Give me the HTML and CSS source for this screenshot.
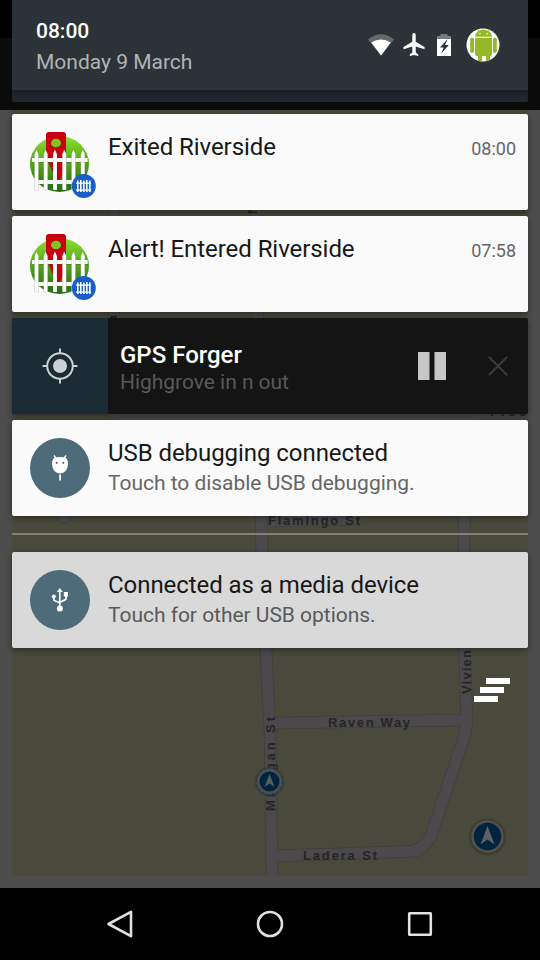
FILE: index.html
```html
<!DOCTYPE html>
<html lang="en">
<head>
<meta charset="utf-8">
<title>Notifications</title>
<link rel="stylesheet" href="styles.css">
</head>
<body>
<svg width="0" height="0" class="defs" aria-hidden="true">
  <defs>
    <linearGradient id="grass" x1="0" y1="0" x2="0" y2="1"><stop offset="0" stop-color="#8ee02c"/><stop offset=".45" stop-color="#58a81c"/><stop offset="1" stop-color="#246b10"/></linearGradient>
    <symbol id="fence" viewBox="0 0 96 96">
      <ellipse cx="47.500" cy="50" rx="29.500" ry="28" fill="url(#grass)"/>
      <path fill="#c8000f" d="M34 21q0-3 3-3h14q3 0 3 3v20q-1 15-7 27q-8-10-13-27z"/>
      <ellipse cx="44" cy="29" rx="5" ry="4.300" fill="#79c820"/>
      <g fill="#2f6518" opacity=".5">
        <path d="M22 44h54v4.800H22zM22 66h32v4.500H22z"/>
      </g>
      <g fill="#fff">
        <path d="M20 44h55.700v4H20zM20 66h52v4H20z"/>
        <path id="picket" d="M22.500 76V40l1.900-4.500 2.100 4.500v36z" stroke="#444" stroke-opacity=".3" stroke-width=".5"/>
        <use href="#picket" x="9.200"/><use href="#picket" x="18.500"/><use href="#picket" x="27.800"/><use href="#picket" x="37"/><use href="#picket" x="46.300"/>
      </g>
      <circle cx="71.800" cy="72" r="12" fill="#185fca"/>
      <g fill="#fff">
        <path d="M64 68.500h15v1.200H64zM64 75.500h15v1.200H64zM65 66.500h1.600V78H65zM68 66h1.600v12H68zM71 66.500h1.600V78H71zM74 66h1.600v12H74zM77 66.500h1.600V78H77z"/>
      </g>
    </symbol>
  </defs>
</svg>
<div class="screen">
  <svg class="backdrop" viewBox="0 0 540 888" width="540" height="888" aria-hidden="true">
    <rect width="540" height="888" fill="#4c4c4c"/>
    <rect width="540" height="110" fill="#0b0b0b"/>
    <rect width="540" height="38" fill="#000"/>
    <rect x="12" y="110" width="516" height="766" fill="#49493c"/>
    <g fill="none" stroke-linejoin="round">
      <g stroke="#3f3f38" stroke-width="12.500">
        <path d="M254 110L262 560L266 650L270 730L272 876M466 418L463 600L467 722M272 723L467 720M275 856L420 851M467 720C467 730 464 738 461 746L431 836Q424 849 412 851M114 204V418"/>
        <path d="M114 417L528 414M270 521L360 519"/>
      </g>
      <g stroke="#4b494b" stroke-width="11">
        <path d="M254 110L262 560L266 650L270 730L272 876M466 418L463 600L467 722M272 723L467 720M275 856L420 851M467 720C467 730 464 738 461 746L431 836Q424 849 412 851M114 204V418"/>
        <path d="M114 417L528 414M270 521L360 519"/>
      </g>
    </g>
    <circle cx="64" cy="517" r="6" fill="#4b494b" stroke="#3e3e38"/>
    <g class="street">
      <text x="268" y="525" textLength="92">Flamingo St</text>
      <text x="490" y="416" textLength="36">Floc</text>
      <text x="328" y="727" textLength="82">Raven Way</text>
      <text x="303" y="860" textLength="74">Ladera St</text>
      <text transform="translate(275 811) rotate(-90)" textLength="94">Milligan St</text>
      <text transform="translate(471 694) rotate(-90)" textLength="44">Vivien</text>
      <text transform="translate(257 214) rotate(-90)">N</text>
      <text transform="translate(117 323) rotate(-90)">n</text>
    </g>
    <circle cx="269.500" cy="781.500" r="15" fill="#333832" opacity=".5"/>
    <circle cx="269.500" cy="781.500" r="13" fill="#4e4e4d" stroke="#123a58" stroke-dasharray="3 2"/>
    <circle cx="269.500" cy="781.500" r="10" fill="#00243e"/>
    <path d="M269.500 774l-5 13 5-3.500 5 3.500z" fill="#5b5b5b"/>
    <circle cx="487.500" cy="837" r="18.500" fill="#34342c" opacity=".6"/>
    <circle cx="487.500" cy="836.500" r="15" fill="#00243e" stroke="#505052" stroke-width="2.600"/>
    <path d="M487.500 826l-7 18.500 7-5 7 5z" fill="#606062"/>
  </svg>

  <header class="header">
    <div class="header-main">
      <div class="clock">
        <div class="clock-time">08:00</div>
        <div class="clock-date">Monday 9 March</div>
      </div>
      <div class="status">
        <svg class="wifi" width="26" height="22" viewBox="0 0 26 22"><path fill="#65696c" d="M0 5.500Q13-5 26 5.500L13 21.500z"/><path fill="#fff" d="M3.300 8.500Q13 2.500 22.700 8.500L13 21.500z"/></svg>
        <svg class="plane" width="22" height="24" viewBox="0 0 22 24"><path fill="#fff" d="M11 0q1.700 0 1.700 2v6.800L21.500 14v2.200l-8.800-2.600v6l2.500 1.900V23L11 22l-4.200 1v-1.500l2.500-1.900v-6L.5 16.200V14l8.800-5.200V2Q9.300 0 11 0z"/></svg>
        <svg class="battery" width="14" height="22" viewBox="0 0 14 22"><path fill="#777c7f" d="M3.500 0h7v2H14v3H0V2h3.500z"/><path fill="#fff" d="M0 5h14v17H0z"/><path fill="#2b3338" d="M10.500 5L3 13.500h3.700L4 20 11.800 11H8z"/></svg>
        <svg class="avatar" width="34" height="34" viewBox="0 0 34 34"><defs><clipPath id="disc"><circle cx="17" cy="17" r="16.500"/></clipPath></defs><circle cx="17" cy="17" r="16.500" fill="#fff"/><g fill="#93b927" clip-path="url(#disc)"><path d="M9 8.800Q9.500 2.500 17.500 1.500Q25.500 2.500 26 8.800zM9 10h17v16q0 2-2 2H11q-2 0-2-2z"/><rect x="4.200" y="9.500" width="3.800" height="15.500" rx="1.900"/><rect x="27" y="9.500" width="3.800" height="15.500" rx="1.900"/><path d="M12 27h4v7h-4zM20 27h4v7h-4z"/></g><path d="M11.500 1.500l2 2.500M23.500 1.500l-2 2.500" stroke="#93b927"/><circle cx="14" cy="5.800" r=".8" fill="#fff"/><circle cx="21" cy="5.800" r=".8" fill="#fff"/></svg>
      </div>
    </div>
  </header>

  <main class="list">
    <article class="card">
      <svg class="icon" width="96" height="96"><use href="#fence"/></svg>
      <div class="body"><div class="title">Exited Riverside</div></div>
      <time class="when">08:00</time>
    </article>
    <article class="card">
      <svg class="icon" width="96" height="96"><use href="#fence"/></svg>
      <div class="body"><div class="title">Alert! Entered Riverside</div></div>
      <time class="when">07:58</time>
    </article>
    <article class="card media">
      <div class="media-art"><svg width="36" height="36" viewBox="0 0 36 36"><circle cx="18" cy="18" r="7" fill="#cbd1d3"/><path d="M18 .5v5M18 30.500v5M.5 18h5M30.500 18h5" stroke="#cbd1d3" stroke-width="2"/><circle cx="18" cy="18" r="12.800" fill="none" stroke="#cbd1d3" stroke-width="2"/></svg></div>
      <div class="body"><div class="title">GPS Forger</div><div class="text">Highgrove in n out</div></div>
      <svg class="pause" width="28" height="28" viewBox="0 0 28 28"><path fill="#c6c6c6" d="M0 0h11.500v28H0zM16.500 0H28v28H16.500z"/></svg>
      <svg class="close" width="20" height="20" viewBox="0 0 20 20"><path d="M.7.700l18.600 18.600M19.300.7L.7 19.300" stroke="#3b3b3b" stroke-width="2"/></svg>
    </article>
    <article class="card">
      <div class="icon"><div class="disc"><svg width="20" height="26" viewBox="0 0 20 26"><path d="M4 .5l3 4M16 .5l-3 4" stroke="#fff" stroke-width="1.300"/><path fill="#fff" d="M3.800 3Q10 1 16.200 3Q18 5 18 9.500Q17.200 18 10 18.500Q2.800 18 2 9.500Q2 5 3.800 3zM9.200 19.500h1.800V25.500H9.200z"/><circle cx="6.700" cy="7.800" r="1.100" fill="#4e6b79"/><circle cx="13.300" cy="7.800" r="1.100" fill="#4e6b79"/></svg></div></div>
      <div class="body"><div class="title">USB debugging connected</div><div class="text">Touch to disable USB debugging.</div></div>
    </article>
    <hr class="divider">
    <article class="card dim">
      <div class="icon"><div class="disc"><svg width="18" height="24" viewBox="0 0 18 24"><g fill="none" stroke="#fff" stroke-width="1.700"><path d="M8.800 2v19M2.800 8v3.500q0 1 1 1.300l5 2M15 6v4.500q0 1-1 1.400l-5.200 2.300"/></g><path fill="#fff" d="M8.800 0l3 4h-6zM12.800 4h4.200v4.500h-4.200z"/><circle cx="2.800" cy="8.500" r="2" fill="#fff"/><circle cx="8.800" cy="20.500" r="3" fill="#fff"/></svg></div></div>
      <div class="body"><div class="title">Connected as a media device</div><div class="text">Touch for other USB options.</div></div>
    </article>
    <svg class="clear-all" width="36" height="24" viewBox="0 0 36 24"><path fill="#fff" d="M12 0h24v6H12zM6 9h24v6H6zM0 18h24v6H0z"/></svg>
  </main>

  <nav class="navbar">
    <svg width="30" height="30" viewBox="0 0 30 30"><path d="M3.500 15L26 2.800v24.400z"/></svg>
    <svg width="30" height="30" viewBox="0 0 30 30"><circle cx="15" cy="15" r="12"/></svg>
    <svg width="30" height="30" viewBox="0 0 30 30"><rect x="4.200" y="4.200" width="21.600" height="21.600" rx=".5"/></svg>
  </nav>
</div>
</body>
</html>
```
FILE: styles.css
```css
* { box-sizing: border-box; }
body { margin: 0; background: #000; font-family: Roboto, "Liberation Sans", sans-serif; }
svg { display: block; flex: none; }
.defs { position: absolute; }
.screen { position: relative; width: 540px; height: 960px; display: flex; flex-direction: column; overflow: hidden; }
.backdrop { position: absolute; top: 0; left: 0; }
.street { font: bold 13px "Liberation Sans", sans-serif; fill: #252525; }

.header { position: relative; height: 102px; margin: 0 12px; background: linear-gradient(#182023 90px, #1d272c 97px); border-radius: 0 0 2px 2px; }
.header-main { height: 90px; background: #2b3338; display: flex; justify-content: space-between; padding: 18px 28px 0 24px; }
.clock { font-size: 21px; line-height: 25px; padding-top: 1px; }
.clock-time { color: #fff; font-weight: 500; margin-bottom: 6px; }
.clock-date { color: #b1b4b6; }
.status { display: flex; align-items: center; height: 54px; }
.plane { margin-left: 9px; }
.battery { margin-left: 12px; }
.avatar { margin-left: 15px; }

.list { position: relative; flex: 1; margin: 12px 12px 0; display: flex; flex-direction: column; gap: 6px; }
.card { height: 96px; flex: none; display: flex; background: #fafafa; border-radius: 2px; box-shadow: 0 2px 6px rgba(0, 0, 0, .4); overflow: hidden; }
.icon { width: 96px; height: 96px; flex: none; display: flex; align-items: center; justify-content: center; }
.disc { width: 60px; height: 60px; border-radius: 50%; background: #4e6b79; display: flex; align-items: center; justify-content: center; }
.body { flex: 1; padding-top: 19px; white-space: nowrap; }
.title { font-size: 24px; line-height: 28px; letter-spacing: -.06px; color: #181818; }
.text { font-size: 21px; line-height: 25px; letter-spacing: -.03px; margin-top: 4px; color: #666; }
.when { font-size: 18px; line-height: 21px; padding: 24px 12px 0 0; color: #666; }
.media { background: #141414; align-items: center; }
.media .body { align-self: flex-start; padding: 23px 0 0 12px; }
.media .title { color: #fff; font-weight: 500; letter-spacing: 0; }
.media .text { margin-top: 1px; color: #595959; }
.media-art { width: 96px; height: 96px; background: #1a2b33; display: flex; align-items: center; justify-content: center; }
.close { margin: 0 20px 0 42px; }
.divider { width: 100%; height: 2px; margin: 11px 0 11px; border: 0; background: #818177; }
.dim { background: #d9d9d9; }
.dim .text { color: #595959; }
.clear-all { align-self: flex-end; margin: 24px 18px 0 0; }

.navbar { position: relative; height: 72px; flex: none; background: #000; display: flex; justify-content: center; align-items: center; gap: 120px; }
.navbar svg { fill: none; stroke: #e0e0e0; stroke-width: 2.600; stroke-linejoin: round; }
```
